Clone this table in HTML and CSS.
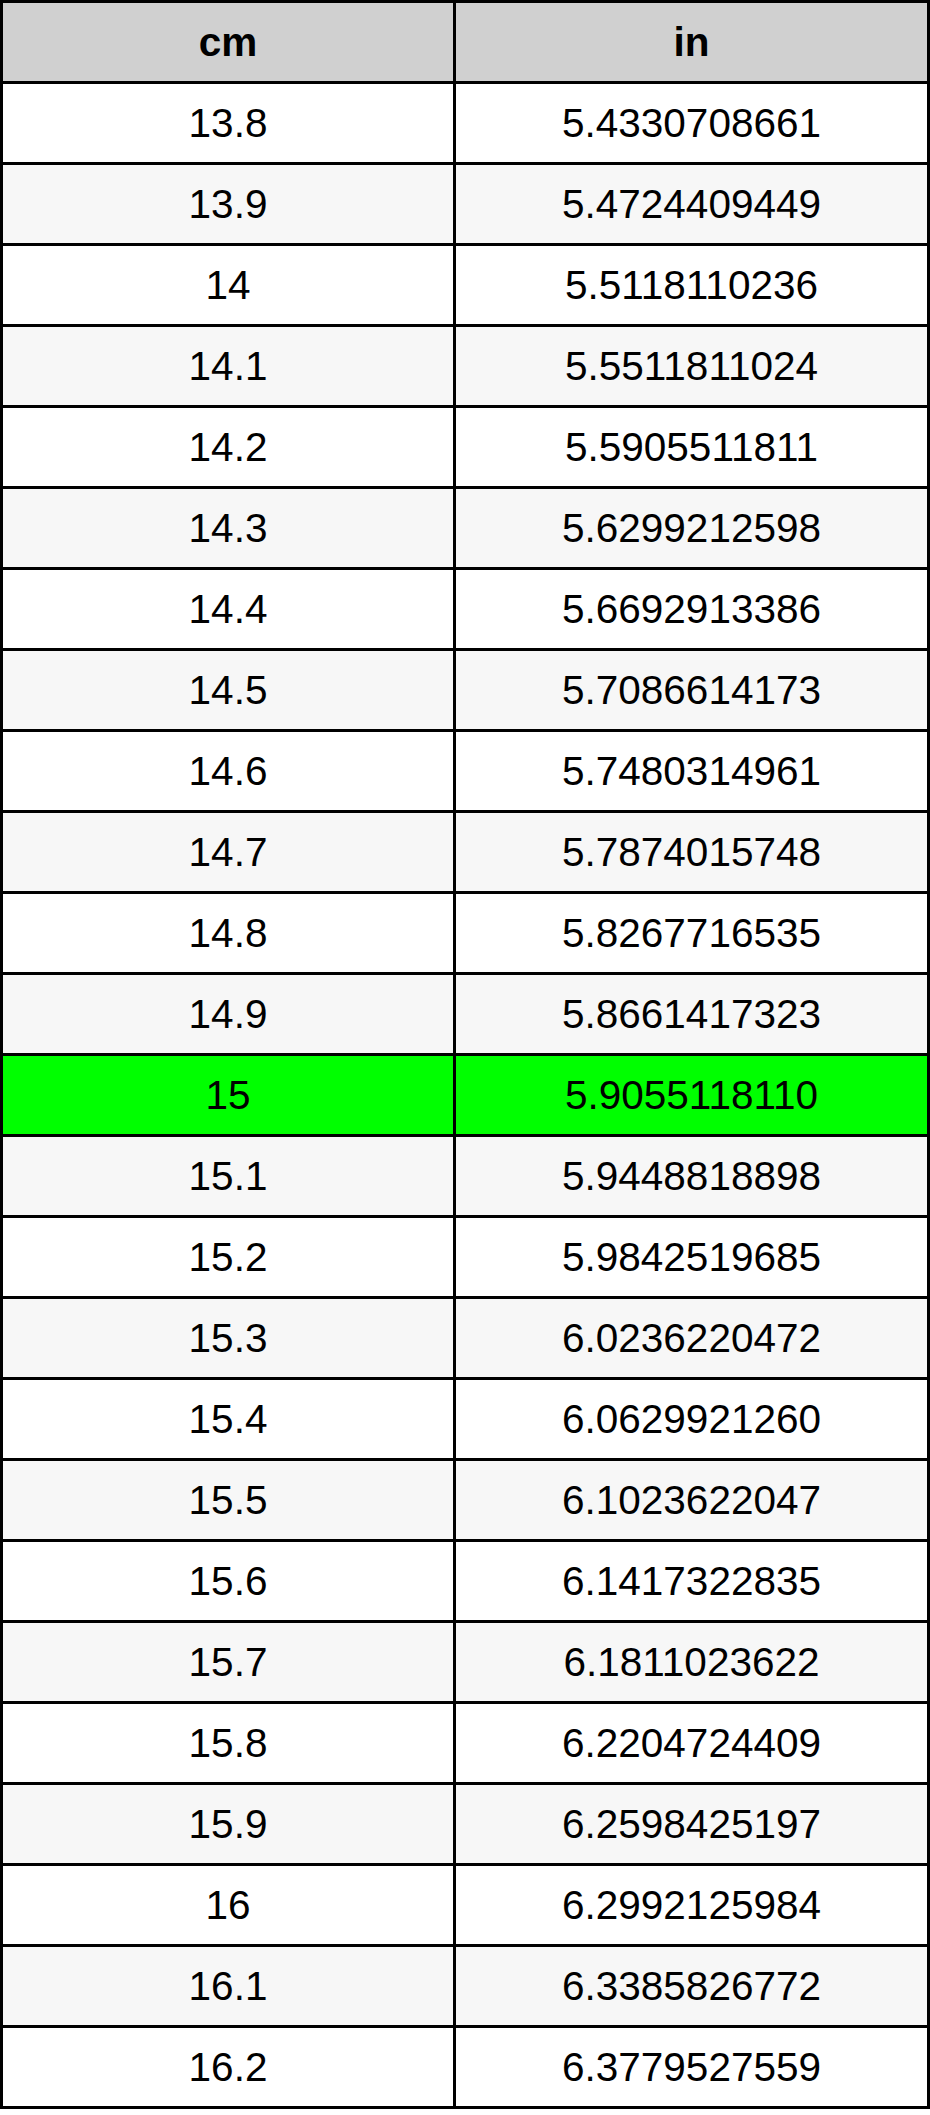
FILE: index.html
```html
<!DOCTYPE html>
<html>
<head>
<meta charset="utf-8">
<title>cm to in</title>
<link rel="stylesheet" href="styles.css">
</head>
<body>
<table class="conv">
  <colgroup><col class="col-cm"><col class="col-in"></colgroup>
  <thead>
    <tr><th>cm</th><th>in</th></tr>
  </thead>
  <tbody>
    <tr><td>13.8</td><td>5.4330708661</td></tr>
    <tr><td>13.9</td><td>5.4724409449</td></tr>
    <tr><td>14</td><td>5.5118110236</td></tr>
    <tr><td>14.1</td><td>5.5511811024</td></tr>
    <tr><td>14.2</td><td>5.5905511811</td></tr>
    <tr><td>14.3</td><td>5.6299212598</td></tr>
    <tr><td>14.4</td><td>5.6692913386</td></tr>
    <tr><td>14.5</td><td>5.7086614173</td></tr>
    <tr><td>14.6</td><td>5.7480314961</td></tr>
    <tr><td>14.7</td><td>5.7874015748</td></tr>
    <tr><td>14.8</td><td>5.8267716535</td></tr>
    <tr><td>14.9</td><td>5.8661417323</td></tr>
    <tr class="hl"><td>15</td><td>5.9055118110</td></tr>
    <tr><td>15.1</td><td>5.9448818898</td></tr>
    <tr><td>15.2</td><td>5.9842519685</td></tr>
    <tr><td>15.3</td><td>6.0236220472</td></tr>
    <tr><td>15.4</td><td>6.0629921260</td></tr>
    <tr><td>15.5</td><td>6.1023622047</td></tr>
    <tr><td>15.6</td><td>6.1417322835</td></tr>
    <tr><td>15.7</td><td>6.1811023622</td></tr>
    <tr><td>15.8</td><td>6.2204724409</td></tr>
    <tr><td>15.9</td><td>6.2598425197</td></tr>
    <tr><td>16</td><td>6.2992125984</td></tr>
    <tr><td>16.1</td><td>6.3385826772</td></tr>
    <tr><td>16.2</td><td>6.3779527559</td></tr>
  </tbody>
</table>
</body>
</html>
```

FILE: styles.css
```css
html, body {
  margin: 0;
  padding: 0;
  background: #ffffff;
}

.conv {
  width: 930px;
  table-layout: fixed;
  border-collapse: separate;
  border-spacing: 3px;
  background: #000000;
  font-family: "Liberation Sans", Arial, sans-serif;
  font-size: 40.5px;
  color: #000000;
}

.col-cm { width: 450px; }
.col-in { width: 471px; }

.conv th,
.conv td {
  height: 78px;
  padding: 0;
  text-align: center;
  vertical-align: middle;
  line-height: 1;
}

.conv th {
  background: #d0d0d0;
  font-weight: bold;
}

.conv tbody tr td {
  background: #ffffff;
}

.conv tbody tr:nth-child(even) td {
  background: #f7f7f7;
}

.conv tbody tr.hl td {
  background: #00ff00;
}
```
